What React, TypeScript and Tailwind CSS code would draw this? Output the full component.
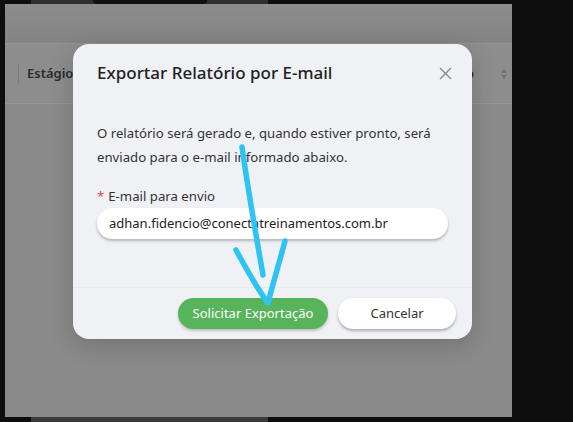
export default function App() {
  return (
    <div className="relative h-[422px] w-[573px] overflow-hidden bg-[#0e0e0e] font-['Noto_Sans',sans-serif]">
      {/* phone top notch strip */}
      <div className="absolute left-[31px] top-0 h-[4px] w-[237px] bg-[#2e2e2e]">
        <div className="mx-auto h-[4px] w-[114px] rounded-b-md bg-[#111]" />
      </div>

      {/* dimmed screen */}
      <div className="absolute left-[5px] top-[4px] flex h-[413px] w-[507px] flex-col bg-[#8a8a8a]">
        <div className="h-[40px] border-b border-[#949494] bg-gradient-to-b from-[#8c8c8c] to-[#848484]" />
        <div className="flex h-[60px] items-center border-b border-[#959595] bg-[#8d8d8d] px-[13px]">
          <div className="h-[20px] w-px bg-[#7a7a7a]" />
          <span className="ml-[8px] text-[13px] font-semibold text-[#2a2a2a]">Estágio</span>
          <span className="ml-auto mr-[26px] text-[13px] font-semibold text-[#2a2a2a]">o</span>
          <svg width="8" height="12" viewBox="0 0 8 12" className="mr-[-9px]">
            <path d="M4 1 L7 5 H1 Z" fill="#707070" />
            <path d="M4 11 L7 7 H1 Z" fill="#707070" />
          </svg>
        </div>
        <div className="flex-1" />
      </div>
      <div className="absolute bottom-0 left-[31px] h-[5px] w-[237px] bg-[#3a3a3a]" />

      {/* modal */}
      <div className="absolute left-[73px] top-[44px] flex h-[295px] w-[399px] flex-col rounded-[16px] bg-[#f0f1f5] shadow-[0_6px_24px_rgba(0,0,0,0.18)]">
        <div className="flex h-[57px] items-center justify-between pl-[24px] pr-[20px] pt-[1px]">
          <h2 className="text-[17px] font-medium text-[#222]">Exportar Relatório por E-mail</h2>
          <svg width="13" height="13" viewBox="0 0 13 13">
            <path d="M1 1 L12 12 M12 1 L1 12" stroke="#8a8a8a" strokeWidth="1.4" />
          </svg>
        </div>
        <div className="px-[24px] pt-[20px]">
          <p className="text-[13.2px] leading-[24px] text-[#333]">
            O relatório será gerado e, quando estiver pronto, será enviado para o e-mail informado abaixo.
          </p>
          <label className="mt-[17px] block text-[13.2px] leading-[20px] text-[#333]">
            <span className="mr-[4px] text-[#e5484d]">*</span>E-mail para envio
          </label>
          <div className="mt-[2px] flex h-[31px] w-[351px] items-center rounded-full bg-white px-[12px] text-[13px] text-[#222] shadow-[0_2px_3px_rgba(0,0,0,0.25)]">
            adhan.fidencio@conectatreinamentos.com.br
          </div>
        </div>
        <div className="mt-auto flex h-[52px] items-start justify-end gap-[10px] border-t border-[#e9eaee] pr-[16px] pt-[10px]">
          <button className="h-[31px] w-[150px] rounded-full bg-[#57b45b] text-[13px] text-white shadow-[0_2px_3px_rgba(0,0,0,0.2)]">
            Solicitar Exportação
          </button>
          <button className="h-[31px] w-[118px] rounded-full bg-white text-[13px] text-[#333] shadow-[0_2px_3px_rgba(0,0,0,0.28)]">
            Cancelar
          </button>
        </div>
      </div>

      {/* hand-drawn arrow */}
      <svg className="pointer-events-none absolute left-0 top-0" width="573" height="422" viewBox="0 0 573 422">
        <path
          d="M242 147 C248 190 256 235 263 275"
          fill="none"
          stroke="#2ec3f3"
          strokeWidth="5.5"
          strokeLinecap="round"
        />
        <path
          d="M236 250 C248 272 258 290 268 303 C274 280 280 260 285 241"
          fill="none"
          stroke="#2ec3f3"
          strokeWidth="5.5"
          strokeLinecap="round"
          strokeLinejoin="round"
        />
      </svg>
    </div>
  );
}
